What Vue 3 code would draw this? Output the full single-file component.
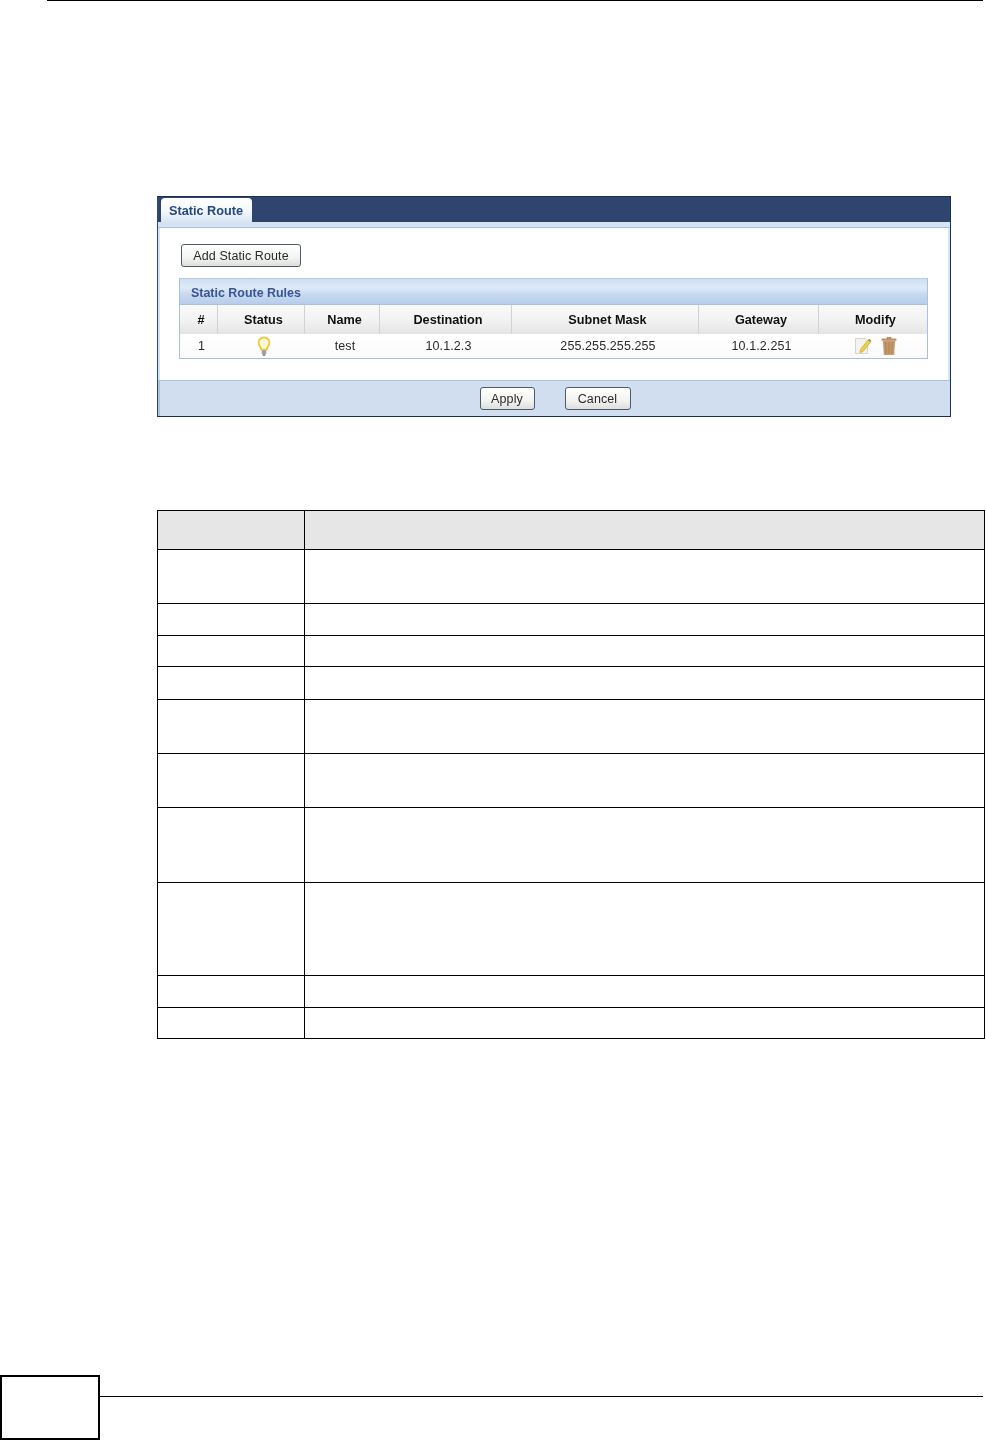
<script setup>
const columns = [
  { head: '#', cell: '1' },
  { head: 'Status', icon: 'bulb' },
  { head: 'Name', cell: 'test' },
  { head: 'Destination', cell: '10.1.2.3' },
  { head: 'Subnet Mask', cell: '255.255.255.255' },
  { head: 'Gateway', cell: '10.1.2.251' },
  { head: 'Modify', icon: 'modify' },
]
const docRows = [54, 32, 31, 33, 54, 54, 75, 93, 32, 31]
</script>

<template>
  <div class="page">
    <div class="top-rule"></div>

    <section class="panel">
      <div class="tabbar">
        <div class="tab">Static Route</div>
      </div>
      <div class="strip"></div>
      <div class="content">
        <button class="btn add" type="button">Add Static Route</button>
        <div class="rules">
          <div class="rules-title">Static Route Rules</div>
          <div class="grid">
            <div v-for="c in columns" :key="c.head" class="th">{{ c.head }}</div>
            <div v-for="c in columns" :key="'d' + c.head" class="td">
              <template v-if="c.cell">{{ c.cell }}</template>
              <svg v-else-if="c.icon === 'bulb'" class="bulb" width="14" height="21" viewBox="0 0 14 21">
                <path d="M7 1.500C3.600 1.500 1.500 3.900 1.500 6.700c0 2.600 2.200 3.900 2.900 7h5.200c.7-3.100 2.900-4.400 2.900-7C12.500 3.900 10.400 1.500 7 1.500z" fill="#fdf8d4" stroke="#ecc940" stroke-width="1.800"/>
                <rect x="4.800" y="14" width="4.400" height="4.500" rx="1" fill="#a3a39c"/>
                <rect x="5.800" y="18" width="2.400" height="1.800" fill="#85857d"/>
              </svg>
              <div v-else class="icons">
                <svg width="18" height="18" viewBox="0 0 18 18">
                  <path d="M1.500 1.500h10l2 2v13h-12z" fill="#f4f4ee" stroke="#d4d4cd"/>
                  <path d="M6.500 12.500 14 3l2.500 2L9 14.500l-3 1z" fill="#f0cf4a" stroke="#c79f26" stroke-width=".7"/>
                  <path d="M14 3l1-1.300 2.300 1.900-.8 1.400z" fill="#9a8a6a"/>
                </svg>
                <svg width="16" height="20" viewBox="0 0 17 20">
                  <rect x="6" y=".5" width="5" height="2" fill="#b58a60"/>
                  <rect x=".5" y="2" width="16" height="2.500" rx="1" fill="#bd9064"/>
                  <path d="M2 4.500h13l-1 15H3z" fill="#c69a6c"/>
                  <path d="M5 6l.5 12M8.500 6v12M12 6l-.5 12" stroke="#ad8156" stroke-width="1.100"/>
                </svg>
              </div>
            </div>
          </div>
        </div>
      </div>
      <div class="actions">
        <button class="btn apply" type="button">Apply</button>
        <button class="btn cancel" type="button">Cancel</button>
      </div>
    </section>

    <table class="doc">
      <colgroup>
        <col class="doc-c1" />
        <col />
      </colgroup>
      <thead>
        <tr class="doc-head"><th></th><th></th></tr>
      </thead>
      <tbody>
        <tr v-for="(h, i) in docRows" :key="i" :style="{ height: h + 'px' }">
          <td></td><td></td>
        </tr>
      </tbody>
    </table>

    <footer class="foot">
      <div class="page-box"></div>
      <div class="foot-rule"></div>
    </footer>
  </div>
</template>

<style>
html, body { margin: 0; background: #fff; }
</style>

<style scoped>
.page {
  height: 1440px;
  display: flex;
  flex-direction: column;
  font-family: "Liberation Sans", Arial, sans-serif;
  background: #fff;
  overflow: hidden;
}
.top-rule {
  height: 1px;
  margin-left: 47px;
  width: 936px;
  background: #000;
  flex: none;
}
.panel {
  flex: none;
  margin: 195px 0 0 157px;
  width: 794px;
  height: 221px;
  box-sizing: border-box;
  border: 1px solid #1d2f52;
  border-left-color: #2d4a78;
  display: flex;
  flex-direction: column;
  background: #fff;
  filter: blur(0.35px);
}
.tabbar {
  flex: none;
  height: 25px;
  background: #2f4570;
  padding-left: 3px;
  display: flex;
  align-items: flex-end;
}
.tab {
  width: 91px;
  height: 24px;
  box-sizing: border-box;
  padding: 5px 0 0 8px;
  border-radius: 4px 4px 0 0;
  background: linear-gradient(#ffffff, #f4f8fc 55%, #d8e5f4);
  color: #23497f;
  font-size: 12.7px;
  font-weight: 700;
  line-height: 16px;
}
.strip {
  flex: none;
  height: 5px;
  background: #d6e3f3;
  border-bottom: 1px solid #a9c1df;
}
.content {
  flex: none;
  height: 152px;
  box-sizing: border-box;
  padding: 16px 21px 0 21px;
  background: #fff;
  border-left: 2px solid #d6e3f3;
  border-right: 2px solid #d6e3f3;
  display: flex;
  flex-direction: column;
  align-items: flex-start;
}
.btn {
  display: block;
  padding: 0;
  box-sizing: border-box;
  border: 1px solid #4d5c6b;
  border-radius: 3px;
  background: linear-gradient(#ffffff, #f3f3f1 60%, #dedfdc);
  color: #2a2a2a;
  font-family: inherit;
  font-size: 12.5px;
  letter-spacing: .1px;
  text-align: center;
}
.add { width: 120px; height: 23px; }
.apply { width: 55px; height: 23px; }
.cancel { width: 66px; height: 23px; }
.rules {
  margin: 11px 0 0 -2px;
  width: 749px;
  box-sizing: border-box;
  border: 1px solid #a9c1df;
  border-top: 1px solid #b6cbe5;
}
.rules-title {
  height: 26px;
  box-sizing: border-box;
  padding: 6px 0 0 11px;
  background: linear-gradient(#cddff3, #dfeaf7 35%, #c8daf1 60%, #b7cdeb);
  border-bottom: 1px solid #a9c1df;
  color: #3a5494;
  font-size: 12.45px;
  font-weight: 700;
  line-height: 16px;
}
.grid {
  display: grid;
  grid-template-columns: 38px 87px 75px 132px 187px 120px 108px;
  grid-template-rows: 29px 24px;
}
.th {
  display: flex;
  align-items: center;
  justify-content: center;
  box-sizing: border-box;
  padding-left: 5px;
  border-right: 1px solid #cfd3d8;
  background: linear-gradient(#fafafa, #f3f3f3 50%, #e4e4e4);
  color: #111;
  font-size: 12.7px;
  font-weight: 700;
}
.th:nth-child(7) { border-right: 0; }
.td {
  display: flex;
  align-items: center;
  justify-content: center;
  box-sizing: border-box;
  padding-left: 5px;
  background: linear-gradient(#ffffff, #fafafa);
  color: #2b2b2b;
  font-size: 12.5px;
  letter-spacing: .1px;
}
.bulb { display: block; }
.icons {
  display: flex;
  align-items: center;
  gap: 9px;
  margin-left: -1px;
}
.icons svg { display: block; flex: none; }
.actions {
  flex: none;
  height: 36px;
  box-sizing: border-box;
  border-top: 1px solid #a9c1df;
  border-left: 2px solid #aac2e0;
  background: #d0deef;
  display: flex;
  align-items: center;
  justify-content: center;
  gap: 30px;
}
.doc {
  flex: none;
  margin: 93px 0 0 157px;
  width: 828px;
  border-collapse: collapse;
  table-layout: fixed;
}
.doc-c1 { width: 147px; }
.doc th,
.doc td {
  border: 1px solid #000;
  padding: 0;
}
.doc-head { height: 39px; }
.doc-head th { background: #e6e6e6; }
.foot {
  margin-top: auto;
  flex: none;
  height: 65px;
  display: flex;
  align-items: flex-start;
}
.page-box {
  width: 100px;
  height: 65px;
  box-sizing: border-box;
  border: 2px solid #000;
  flex: none;
}
.foot-rule {
  margin-top: 21px;
  width: 883px;
  height: 1px;
  background: #000;
}
</style>
